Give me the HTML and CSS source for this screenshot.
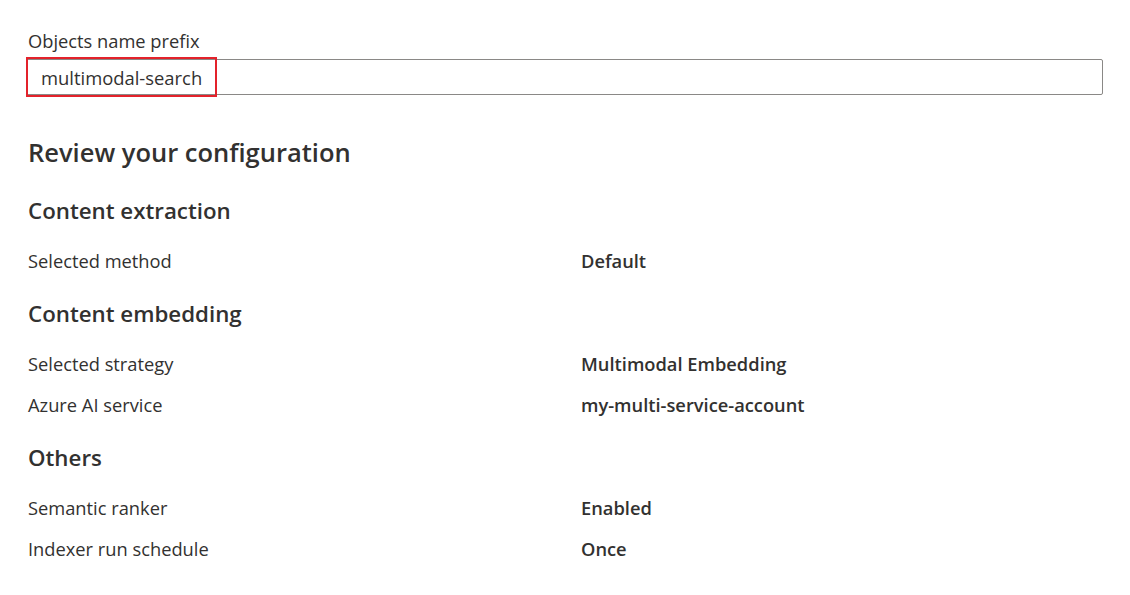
FILE: index.html
```html
<!DOCTYPE html>
<html lang="en">
<head>
<meta charset="utf-8">
<title>Review</title>
<link rel="stylesheet" href="styles.css">
</head>
<body>
<main class="page">
  <div class="field">
    <label class="field-label" for="prefix">Objects name prefix</label>
    <div class="input-wrap">
      <input id="prefix" class="text-input" type="text" value="multimodal-search">
      <span class="highlight"></span>
    </div>
  </div>

  <h1 class="title">Review your configuration</h1>

  <section class="group">
    <h2 class="group-title">Content extraction</h2>
    <div class="rows">
      <div class="row"><span class="key">Selected method</span><span class="val">Default</span></div>
    </div>
  </section>

  <section class="group">
    <h2 class="group-title">Content embedding</h2>
    <div class="rows">
      <div class="row"><span class="key">Selected strategy</span><span class="val">Multimodal Embedding</span></div>
      <div class="row"><span class="key">Azure AI service</span><span class="val">my-multi-service-account</span></div>
    </div>
  </section>

  <section class="group">
    <h2 class="group-title">Others</h2>
    <div class="rows">
      <div class="row"><span class="key">Semantic ranker</span><span class="val">Enabled</span></div>
      <div class="row"><span class="key">Indexer run schedule</span><span class="val">Once</span></div>
    </div>
  </section>
</main>
</body>
</html>
```

FILE: styles.css
```css
* { box-sizing: border-box; }
html, body { margin: 0; background: #ffffff; }
body {
  font-family: "Open Sans", "Noto Sans", "Liberation Sans", sans-serif;
  color: #323130;
}
.page {
  padding: 29px 27px 0 26px;
  width: 1130px;
}
.field { display: flex; flex-direction: column; }
.field-label {
  font-size: 18.3px;
  line-height: 24px;
  padding-left: 2px;
  margin-bottom: 6px;
}
.input-wrap { position: relative; height: 36px; }
.text-input {
  width: 100%;
  height: 36px;
  border: 1px solid #8a8886;
  border-radius: 2px;
  padding: 0 14px;
  font: inherit;
  font-size: 18.4px;
  color: #323130;
  outline: none;
  background: #fff;
}
.highlight {
  position: absolute;
  left: 0;
  top: -2px;
  width: 191px;
  height: 40px;
  border: 2px solid #e3222b;
  pointer-events: none;
}
.title {
  margin: 39px 0 0 2px;
  font-size: 25.5px;
  line-height: 36px;
  font-weight: 600;
}
.group { margin-left: 2px; }
.group-title {
  margin: 0;
  font-size: 22.3px;
  line-height: 30px;
  font-weight: 600;
}
.title + .group .group-title { margin-top: 26px; }
.rows { display: flex; flex-direction: column; gap: 17px; margin-top: 23px; margin-bottom: 26px; }
.row {
  display: grid;
  grid-template-columns: 553px 1fr;
  font-size: 18.3px;
  line-height: 24px;
}
.val { font-weight: 600; }
```
